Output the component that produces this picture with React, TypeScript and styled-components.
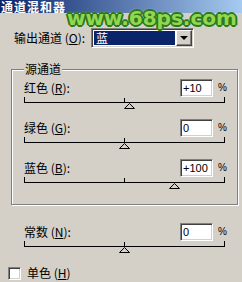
import * as React from 'react'
import styled, { createGlobalStyle } from 'styled-components'

const GlobalStyle = createGlobalStyle`
	html, body {
		margin: 0;
		padding: 0;
		background: #d4d0c8;
	}
	body {
		font-family: "Noto Sans CJK SC", "Liberation Sans", sans-serif;
		font-size: 12px;
		color: #000;
	}
`

const Window = styled.div`
	position: relative;
	width: 242px;
	height: 282px;
	overflow: hidden;
	background: #d4d0c8;
`
const TitleBar = styled.div`
	height: 13px;
	padding-left: 1px;
	background: linear-gradient(to right, #0a246a, #a6caf0);
	color: #fff;
	font-weight: bold;
	font-size: 12px;
	line-height: 13px;
	letter-spacing: 1px;
	white-space: nowrap;
`
const Watermark = styled.div`
	position: absolute;
	left: 67px;
	top: 7px;
	font-family: "DejaVu Sans", sans-serif;
	font-weight: bold;
	font-size: 20px;
	line-height: 22px;
	color: #93d653;
	white-space: nowrap;
	text-shadow:
		1px 0 0 #2b7a1c, -1px 0 0 #2b7a1c, 0 1px 0 #2b7a1c, 0 -1px 0 #2b7a1c,
		2px 0 0 #2b7a1c, -2px 0 0 #2b7a1c, 0 2px 0 #2b7a1c, 0 -2px 0 #2b7a1c,
		1px 1px 0 #2b7a1c, -1px -1px 0 #2b7a1c, 1px -1px 0 #2b7a1c, -1px 1px 0 #2b7a1c,
		0 0 3px #ffffff, 0 0 3px #ffffff;
`
const Label = styled.span`
	white-space: nowrap;
	line-height: 14px;
`
const OutputRow = styled.div`
	display: flex;
	align-items: center;
	height: 20px;
	margin-top: 15px;
	padding-left: 14px;
`
const OutputLabel = styled(Label)`
	width: 77px;
`
const Combo = styled.div`
	display: flex;
	box-sizing: border-box;
	width: 103px;
	height: 20px;
	padding: 1px;
	border-top: 1px solid #808080;
	border-left: 1px solid #808080;
	border-bottom: 1px solid #fff;
	border-right: 1px solid #fff;
	box-shadow: inset 1px 1px 0 #404040, inset -1px -1px 0 #d4d0c8;
	background: #fff;
`
const ComboValue = styled.div`
	flex: 1;
	margin: 1px;
	padding-left: 2px;
	background: #0a246a;
	outline: 1px dotted #fff;
	color: #fff;
	line-height: 14px;
`
const ComboButton = styled.div`
	display: flex;
	align-items: center;
	justify-content: center;
	box-sizing: border-box;
	width: 16px;
	height: 16px;
	background: #d4d0c8;
	border-top: 1px solid #fff;
	border-left: 1px solid #fff;
	border-bottom: 1px solid #404040;
	border-right: 1px solid #404040;
	box-shadow: inset -1px -1px 0 #808080;
	&::after {
		content: '';
		border-left: 4px solid transparent;
		border-right: 4px solid transparent;
		border-top: 4px solid #000;
	}
`
const Group = styled.fieldset`
	box-sizing: border-box;
	width: 227px;
	min-width: 0;
	margin: 14px 0 0 11px;
	padding: 3px 0 5px 12px;
	border: 1px solid #808080;
	box-shadow: inset 1px 1px 0 #fff, 1px 1px 0 #fff;
`
const Legend = styled.legend`
	padding: 0 1px;
	font-size: 12px;
	line-height: 14px;
	background: #d4d0c8;
`
const SliderRow = styled.div`
	width: 201px;
	height: 40px;
`
const RowHead = styled.div`
	display: flex;
	align-items: center;
	height: 18px;
`
const NumberField = styled.div`
	box-sizing: border-box;
	width: 33px;
	height: 18px;
	margin-left: auto;
	margin-right: 5px;
	padding-left: 2px;
	background: #fff;
	border-top: 1px solid #808080;
	border-left: 1px solid #808080;
	border-bottom: 1px solid #fff;
	border-right: 1px solid #fff;
	box-shadow: inset 1px 1px 0 #404040, inset -1px -1px 0 #d4d0c8;
	font-family: "Liberation Sans", sans-serif;
	font-size: 11px;
	line-height: 16px;
`
const Percent = styled.span`
	width: 7px;
	font-family: "Liberation Sans", sans-serif;
	font-size: 10px;
	line-height: 12px;
`
const Track = styled.div`
	position: relative;
	box-sizing: border-box;
	height: 6px;
	border-bottom: 1px solid #000;
	&::before,
	&::after {
		content: '';
		position: absolute;
		bottom: 0;
		width: 1px;
		height: 5px;
		background: #000;
	}
	&::before {
		left: 0;
	}
	&::after {
		right: 0;
	}
`
const MidTick = styled.div`
	position: absolute;
	left: 100px;
	bottom: 0;
	width: 1px;
	height: 4px;
	background: #000;
`
const Thumb = styled.svg`
	position: absolute;
	top: 6px;
	width: 11px;
	height: 6px;
	overflow: visible;
`
const OuterRow = styled.div`
	margin-top: 18px;
	padding-left: 24px;
`
const CheckRow = styled.div`
	display: flex;
	align-items: center;
	gap: 6px;
	margin-top: 3px;
	padding-left: 8px;
`
const CheckBox = styled.div`
	box-sizing: border-box;
	width: 13px;
	height: 13px;
	background: #fff;
	border-top: 1px solid #808080;
	border-left: 1px solid #808080;
	border-bottom: 1px solid #fff;
	border-right: 1px solid #fff;
	box-shadow: inset 1px 1px 0 #404040, inset -1px -1px 0 #d4d0c8;
`

interface ISliderProps {
	name: string
	mnemonic: string
	value: number
}

const Slider = ({ name, mnemonic, value }: ISliderProps) => {
	const center = 100 + (value / 200) * 100
	const text = value > 0 ? `+${value}` : `${value}`
	return (
		<SliderRow>
			<RowHead>
				<Label>
					{name} (<u>{mnemonic}</u>):
				</Label>
				<NumberField>{text}</NumberField>
				<Percent>%</Percent>
			</RowHead>
			<Track>
				<MidTick />
				<Thumb style={{ left: center - 5 }} viewBox="0 0 11 6">
					<polygon points="5.5,0.5 10.5,5.5 0.5,5.5" fill="#d4d0c8" stroke="#000" strokeWidth="1" />
				</Thumb>
			</Track>
		</SliderRow>
	)
}

const App = () => (
	<Window>
		<GlobalStyle />
		<TitleBar>通道混和器</TitleBar>
		<OutputRow>
			<OutputLabel>
				输出通道 (<u>O</u>):
			</OutputLabel>
			<Combo>
				<ComboValue>蓝</ComboValue>
				<ComboButton />
			</Combo>
		</OutputRow>
		<Group>
			<Legend>源通道</Legend>
			<Slider name="红色" mnemonic="R" value={10} />
			<Slider name="绿色" mnemonic="G" value={0} />
			<Slider name="蓝色" mnemonic="B" value={100} />
		</Group>
		<OuterRow>
			<Slider name="常数" mnemonic="N" value={0} />
		</OuterRow>
		<CheckRow>
			<CheckBox />
			<Label>
				单色 (<u>H</u>)
			</Label>
		</CheckRow>
		<Watermark>www.68ps.com</Watermark>
	</Window>
)

export default App
